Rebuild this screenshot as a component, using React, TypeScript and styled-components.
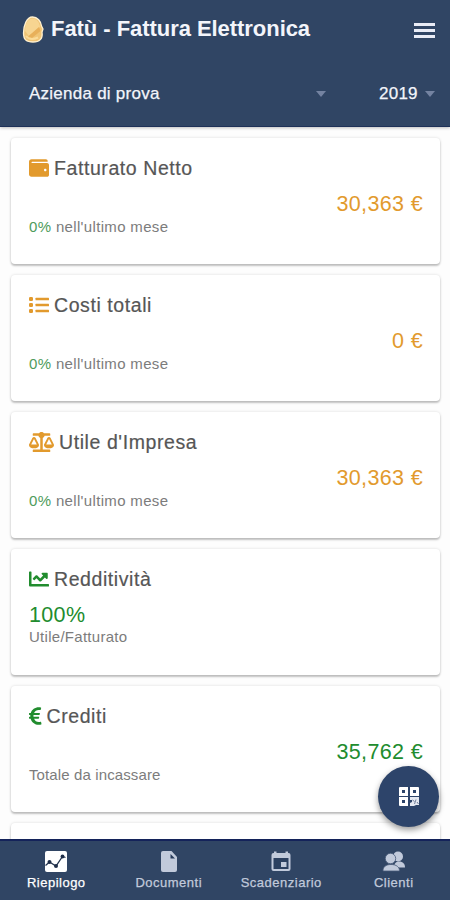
import React from 'react';
import styled, { createGlobalStyle } from 'styled-components';
import { FaWallet, FaBalanceScale, FaChartLine, FaEuroSign } from 'react-icons/fa';

const NAVY = '#304564';
const ORANGE = '#e29a2d';
const GREEN = '#218c2e';

const GlobalStyle = createGlobalStyle`
  * { box-sizing: border-box; }
  body { margin: 0; background: #fdfdfd; font-family: "Liberation Sans", Arial, sans-serif; }
`;

const Screen = styled.div`
  position: relative;
  display: flex;
  flex-direction: column;
  width: 450px;
  height: 900px;
  overflow: hidden;
`;

const Header = styled.header`
  flex: none;
  height: 127px;
  background: ${NAVY};
  border-bottom: 1px solid #1e3158;
  box-shadow: 0 1px 3px rgba(0, 0, 0, 0.25);
  color: #f3f5fb;
`;

const TitleBar = styled.div`
  display: flex;
  align-items: center;
  height: 60px;
  padding: 0 15px 0 22px;
`;

const Title = styled.h1`
  flex: 1;
  margin: 0 0 3px 6px;
  font-size: 22px;
  line-height: 26px;
  font-weight: 700;
  letter-spacing: -0.05px;
  white-space: nowrap;
`;

const MenuButton = styled.button`
  display: flex;
  flex-direction: column;
  justify-content: space-between;
  width: 21px;
  height: 15px;
  margin-top: 1px;
  padding: 0;
  border: 0;
  background: none;
`;

const MenuLine = styled.span`
  height: 3px;
  background: #e9ecf6;
`;

const FilterBar = styled.div`
  display: flex;
  align-items: center;
  justify-content: space-between;
  height: 66px;
  padding: 1px 15px 0 29px;
`;

const Select = styled.div<{ $width: number }>`
  display: flex;
  align-items: center;
  justify-content: space-between;
  width: ${(p) => p.$width}px;
  font-size: 17px;
  letter-spacing: 0.25px;
  -webkit-text-stroke: 0.25px currentColor;
`;

const Caret = styled.span`
  width: 0;
  height: 0;
  border: 5.5px solid transparent;
  border-top: 6px solid #7483a1;
  border-bottom: 0;
`;

const Content = styled.main`
  flex: 1;
  min-height: 0;
  overflow: hidden;
  display: flex;
  flex-direction: column;
  gap: 11px;
  padding: 11px 10px 0 11px;
`;

const CardBox = styled.section`
  flex: none;
  display: flex;
  flex-direction: column;
  height: 126px;
  padding: 16px 17px 0 18px;
  border-radius: 4px;
  background: #fff;
  box-shadow: 0 2px 2px rgba(0, 0, 0, 0.22), 0 0 3px rgba(0, 0, 0, 0.14);
`;

const CardTitle = styled.h2<{ $iconColor: string; $iconWidth: number }>`
  display: flex;
  align-items: center;
  gap: 5px;
  height: 28px;
  margin: 0;
  font-size: 19.5px;
  font-weight: 400;
  letter-spacing: 0.58px;
  color: #565656;
  -webkit-text-stroke: 0.2px currentColor;
  svg {
    flex: none;
    width: ${(p) => p.$iconWidth}px;
    height: 20px;
    color: ${(p) => p.$iconColor};
    -webkit-text-stroke: 0;
  }
`;

const Amount = styled.div<{ $color: string; $left?: boolean }>`
  align-self: ${(p) => (p.$left ? 'flex-start' : 'flex-end')};
  margin-top: 9px;
  height: 26px;
  font-size: 21.5px;
  line-height: 26px;
  letter-spacing: 0.35px;
  color: ${(p) => p.$color};
`;

const Note = styled.div<{ $tight?: boolean; $spacing?: number }>`
  margin-top: ${(p) => (p.$tight ? -1 : 0)}px;
  font-size: 15px;
  line-height: 20px;
  letter-spacing: ${(p) => p.$spacing ?? 0.34}px;
  color: #7c7c7c;
`;

const Percent = styled.span`
  color: #4e9c5c;
`;

const ScanButton = styled.button`
  position: absolute;
  left: 378px;
  top: 766px;
  display: flex;
  align-items: center;
  justify-content: center;
  width: 61px;
  height: 61px;
  padding: 0;
  border: 0;
  border-radius: 50%;
  background: #2d446a;
  box-shadow: 0 3px 6px rgba(0, 0, 0, 0.4);
`;

const TabBar = styled.nav`
  flex: none;
  display: grid;
  grid-template-columns: repeat(4, 1fr);
  height: 61px;
  border-top: 2px solid #14235a;
  background: ${NAVY};
`;

const Tab = styled.div<{ $active?: boolean }>`
  display: flex;
  flex-direction: column;
  align-items: center;
  padding-top: 9px;
  color: ${(p) => (p.$active ? '#fff' : '#c1cadb')};
  svg { height: 24px; }
`;

const TabLabel = styled.span`
  margin-top: 1px;
  font-size: 13px;
  line-height: 16px;
  letter-spacing: 0.5px;
  -webkit-text-stroke: 0.25px currentColor;
`;

const EggLogo = () => (
  <svg width="23" height="30" viewBox="0 0 23 30">
    <path d="M10.5 2C15.5 2 19 6.500 19.500 11l1.500 3-1 3c1 7-2.500 10-9 10S1.500 25 1.500 18 4.500 2 10.500 2Z" fill="#f0c475" stroke="#fff0cf" strokeWidth="1.3" />
    <path d="M3 16C3 9 6 3.500 10.500 3.500 15 3.500 17.500 8 18 12L7 21Z" fill="#f7d591" />
    <path d="M6 21.500 17 12l1.500 4L10 23Z" fill="#e8b05a" />
    <path d="M4 21q4 5 12 1.500" fill="none" stroke="#fbdb98" strokeWidth="2" />
  </svg>
);

const BulletListIcon = () => (
  <svg viewBox="0 0 20 20" fill="currentColor">
    <rect y="2" width="4" height="4" rx="1.300" />
    <rect y="8" width="4" height="4" rx="1.300" />
    <rect y="14" width="4" height="4" rx="1.300" />
    <rect x="6.500" y="2.700" width="13.500" height="2.500" rx=".5" />
    <rect x="6.500" y="8.700" width="13.500" height="2.500" rx=".5" />
    <rect x="6.500" y="14.700" width="13.500" height="2.500" rx=".5" />
  </svg>
);

const QrIcon = () => (
  <svg width="20" height="19" viewBox="0 0 20 19" fill="#fff">
    <path fillRule="evenodd" d="M1 0h8v9H0V1a1 1 0 0 1 1-1Zm2 3v3h3V3ZM11 0h8q1 0 1 1v8h-9Zm3 3v3h3V3ZM0 10h9v9H1q-1 0-1-1Zm3 3v3h3v-3Z" />
    <path d="M11 10h9v8h-3l-2 1h-4v-3l2-1v-2h-2Z" fill="#e5e9f2" />
    <path d="m13.500 13 2 1.500M17 12.500l-1.500 4.500M18 15l1.500 2" stroke="#71809b" strokeWidth="1" />
  </svg>
);

const SummaryIcon = () => (
  <svg width="24" viewBox="0 0 24 24">
    <rect x="1" y="1" width="22" height="21" rx="2" fill="#fff" />
    <path d="m1.500 15.500 4-3.500 6.500 4 6.500-9.500 3 1" fill="none" stroke="#263650" strokeWidth="1.300" />
    <g fill="#1f2e48"><circle cx="5.500" cy="12" r="2" /><circle cx="12" cy="16" r="2" /><circle cx="18.500" cy="6.500" r="1.900" /></g>
  </svg>
);

const DocumentIcon = () => (
  <svg width="24" viewBox="0 0 24 24">
    <path d="M6 1h8.500l5.500 6v13a2 2 0 0 1-2 2H6a2 2 0 0 1-2-2V3a2 2 0 0 1 2-2Z" fill="currentColor" />
    <path d="M13.500 4v4.500H18Z" fill="#263a5a" />
  </svg>
);

const CalendarIcon = () => (
  <svg width="24" viewBox="0 0 24 24">
    <path d="M5 1.500h2.500V3h9V1.500H19V3h.5a2 2 0 0 1 2 2v14a2 2 0 0 1-2 2h-15a2 2 0 0 1-2-2V5a2 2 0 0 1 2-2H5Z" fill="currentColor" />
    <path d="M4.500 8h15v11h-15Z" fill="#2b4060" />
    <path d="M12 12h5.500v5H12Z" fill="currentColor" />
  </svg>
);

const ClientsIcon = () => (
  <svg width="24" viewBox="0 0 24 24" fill="currentColor">
    <circle cx="16" cy="6.500" r="5" />
    <path d="M12 17.500c0-4 2-6 5-6 4 0 6 2.500 6 6Z" />
    <g stroke="#465977" strokeWidth=".8">
      <circle cx="8.500" cy="8.500" r="5.200" />
      <path d="M1 21c0-4 2.500-6.500 8-6.500s8.500 2.500 8.500 6.500Z" />
    </g>
  </svg>
);

interface CardData {
  title: string;
  icon: React.ReactNode;
  iconWidth: number;
  color: string;
  amount: string;
  left?: boolean;
  note?: string;
  noteSpacing?: number;
}

const cards: CardData[] = [
  { title: 'Fatturato Netto', icon: <FaWallet />, iconWidth: 20, color: ORANGE, amount: '30,363 €' },
  { title: 'Costi totali', icon: <BulletListIcon />, iconWidth: 20, color: ORANGE, amount: '0 €' },
  { title: "Utile d'Impresa", icon: <FaBalanceScale />, iconWidth: 25, color: ORANGE, amount: '30,363 €' },
  { title: 'Redditività', icon: <FaChartLine />, iconWidth: 20, color: GREEN, amount: '100%', left: true, note: 'Utile/Fatturato', noteSpacing: 0.28 },
  { title: 'Crediti', icon: <FaEuroSign />, iconWidth: 12.5, color: GREEN, amount: '35,762 €', note: 'Totale da incassare', noteSpacing: 0.12 },
];

const tabs = [
  { label: 'Riepilogo', icon: <SummaryIcon /> },
  { label: 'Documenti', icon: <DocumentIcon /> },
  { label: 'Scadenziario', icon: <CalendarIcon /> },
  { label: 'Clienti', icon: <ClientsIcon /> },
];

export default function App() {
  return (
    <Screen>
      <GlobalStyle />
      <Header>
        <TitleBar>
          <EggLogo />
          <Title>Fatù - Fattura Elettronica</Title>
          <MenuButton aria-label="Menu"><MenuLine /><MenuLine /><MenuLine /></MenuButton>
        </TitleBar>
        <FilterBar>
          <Select $width={297}>Azienda di prova<Caret /></Select>
          <Select $width={56}>2019<Caret /></Select>
        </FilterBar>
      </Header>
      <Content>
        {cards.map((c) => (
          <CardBox key={c.title}>
            <CardTitle $iconColor={c.color} $iconWidth={c.iconWidth}>{c.icon}{c.title}</CardTitle>
            <Amount $color={c.color} $left={c.left}>{c.amount}</Amount>
            <Note $tight={c.left} $spacing={c.noteSpacing}>
              {c.note ?? <><Percent>0%</Percent> nell'ultimo mese</>}
            </Note>
          </CardBox>
        ))}
        <CardBox />
      </Content>
      <TabBar>
        {tabs.map((t, i) => (
          <Tab key={t.label} $active={i === 0}>{t.icon}<TabLabel>{t.label}</TabLabel></Tab>
        ))}
      </TabBar>
      <ScanButton aria-label="QR"><QrIcon /></ScanButton>
    </Screen>
  );
}
